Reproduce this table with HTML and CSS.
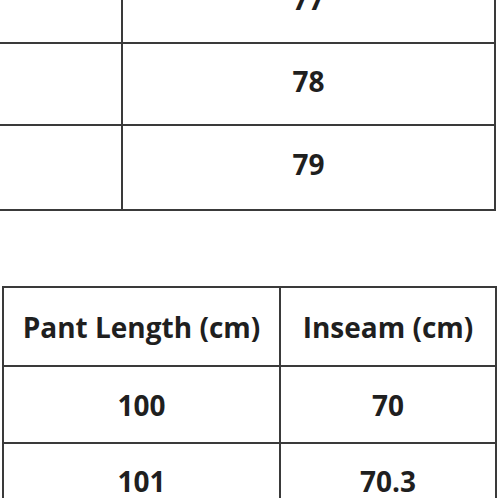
FILE: index.html
```html
<!DOCTYPE html>
<html>
<head>
<meta charset="utf-8">
<link rel="stylesheet" href="styles.css">
</head>
<body>
<div class="sheet">
  <div class="grid grid-top">
    <div class="cell"></div>
    <div class="cell">77</div>
    <div class="cell"></div>
    <div class="cell">78</div>
    <div class="cell"></div>
    <div class="cell">79</div>
  </div>
  <div class="grid grid-bottom">
    <div class="cell">Pant Length (cm)</div>
    <div class="cell">Inseam (cm)</div>
    <div class="cell">100</div>
    <div class="cell">70</div>
    <div class="cell">101</div>
    <div class="cell">70.3</div>
  </div>
</div>
</body>
</html>
```
FILE: styles.css
```css
html, body {
  margin: 0;
  padding: 0;
  background: #ffffff;
  overflow: hidden;
}

.sheet {
  display: flex;
  flex-direction: column;
  align-items: flex-start;
  font-family: "Open Sans", "Noto Sans", sans-serif;
  font-weight: 700;
  font-size: 28px;
  line-height: 28px;
  color: #1f1f1f;
}

.grid {
  display: grid;
  gap: 2px;
  padding: 2px;
  background: #3a3a3a;
}

.grid-top {
  grid-template-columns: 139px 371px;
  grid-template-rows: 80px 80px 83px;
  margin: -40px 0 0 -20px;
}

.grid-bottom {
  grid-template-columns: 275px 214px;
  grid-template-rows: 77px 75px 74px;
  margin: 75px 0 0 2px;
}

.cell {
  background: #ffffff;
  display: flex;
  align-items: center;
  justify-content: center;
  white-space: nowrap;
}

.grid-top .cell {
  padding-bottom: 7px;
}
```
